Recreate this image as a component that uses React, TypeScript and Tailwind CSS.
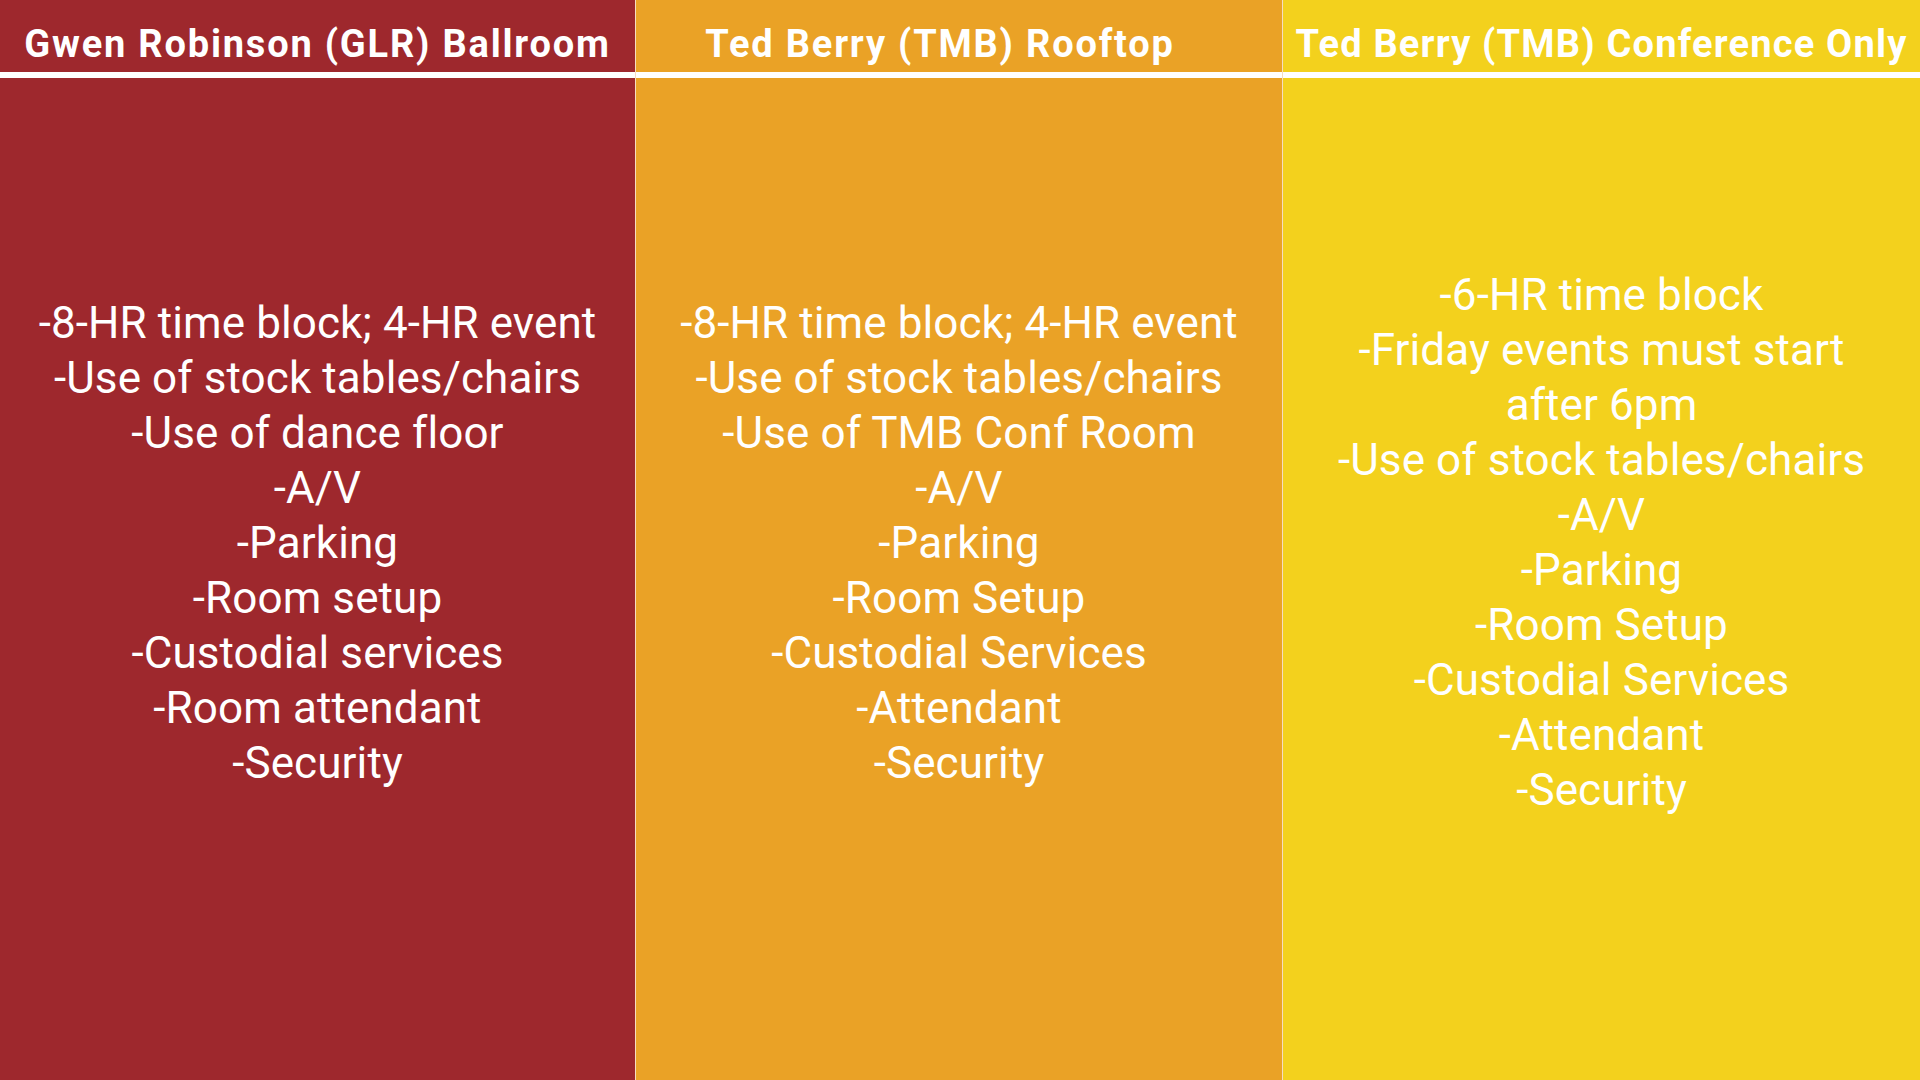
const columns = [
  {
    title: "Gwen Robinson (GLR) Ballroom",
    bg: "bg-[#9e282d]",
    head: "tracking-[1.8px]",
    items: [
      "-8-HR time block; 4-HR event",
      "-Use of stock tables/chairs",
      "-Use of dance floor",
      "-A/V",
      "-Parking",
      "-Room setup",
      "-Custodial services",
      "-Room attendant",
      "-Security",
    ],
  },
  {
    title: "Ted Berry (TMB) Rooftop",
    bg: "bg-[#eaa226]",
    head: "tracking-[1.8px] pr-[38px]",
    items: [
      "-8-HR time block; 4-HR event",
      "-Use of stock tables/chairs",
      "-Use of TMB Conf Room",
      "-A/V",
      "-Parking",
      "-Room Setup",
      "-Custodial Services",
      "-Attendant",
      "-Security",
    ],
  },
  {
    title: "Ted Berry (TMB) Conference Only",
    bg: "bg-[#f3d11d]",
    head: "tracking-[1.2px]",
    items: [
      "-6-HR time block",
      "-Friday events must start\nafter 6pm",
      "-Use of stock tables/chairs",
      "-A/V",
      "-Parking",
      "-Room Setup",
      "-Custodial Services",
      "-Attendant",
      "-Security",
    ],
  },
];

export default function App() {
  return (
    <div className="grid h-screen w-full grid-cols-[635px_647px_1fr] overflow-hidden font-['Roboto',sans-serif] text-white">
      {columns.map((col, i) => (
        <div key={col.title} className={`flex flex-col ${col.bg} ${i > 0 ? "border-l border-[#f6dcc0]" : ""}`}>
          <div className={`h-[72px] whitespace-nowrap pt-[22px] text-center text-[38px] font-bold leading-[44px] ${col.head}`}>
            {col.title}
          </div>
          <div className="h-[6px] bg-white" />
          <div className="flex flex-1 flex-col items-center justify-center pb-[72px] text-center text-[44px] leading-[55px] tracking-[0.1px]">
            {col.items.map((item) => (
              <div key={item} className="whitespace-pre-line">{item}</div>
            ))}
          </div>
        </div>
      ))}
    </div>
  );
}
